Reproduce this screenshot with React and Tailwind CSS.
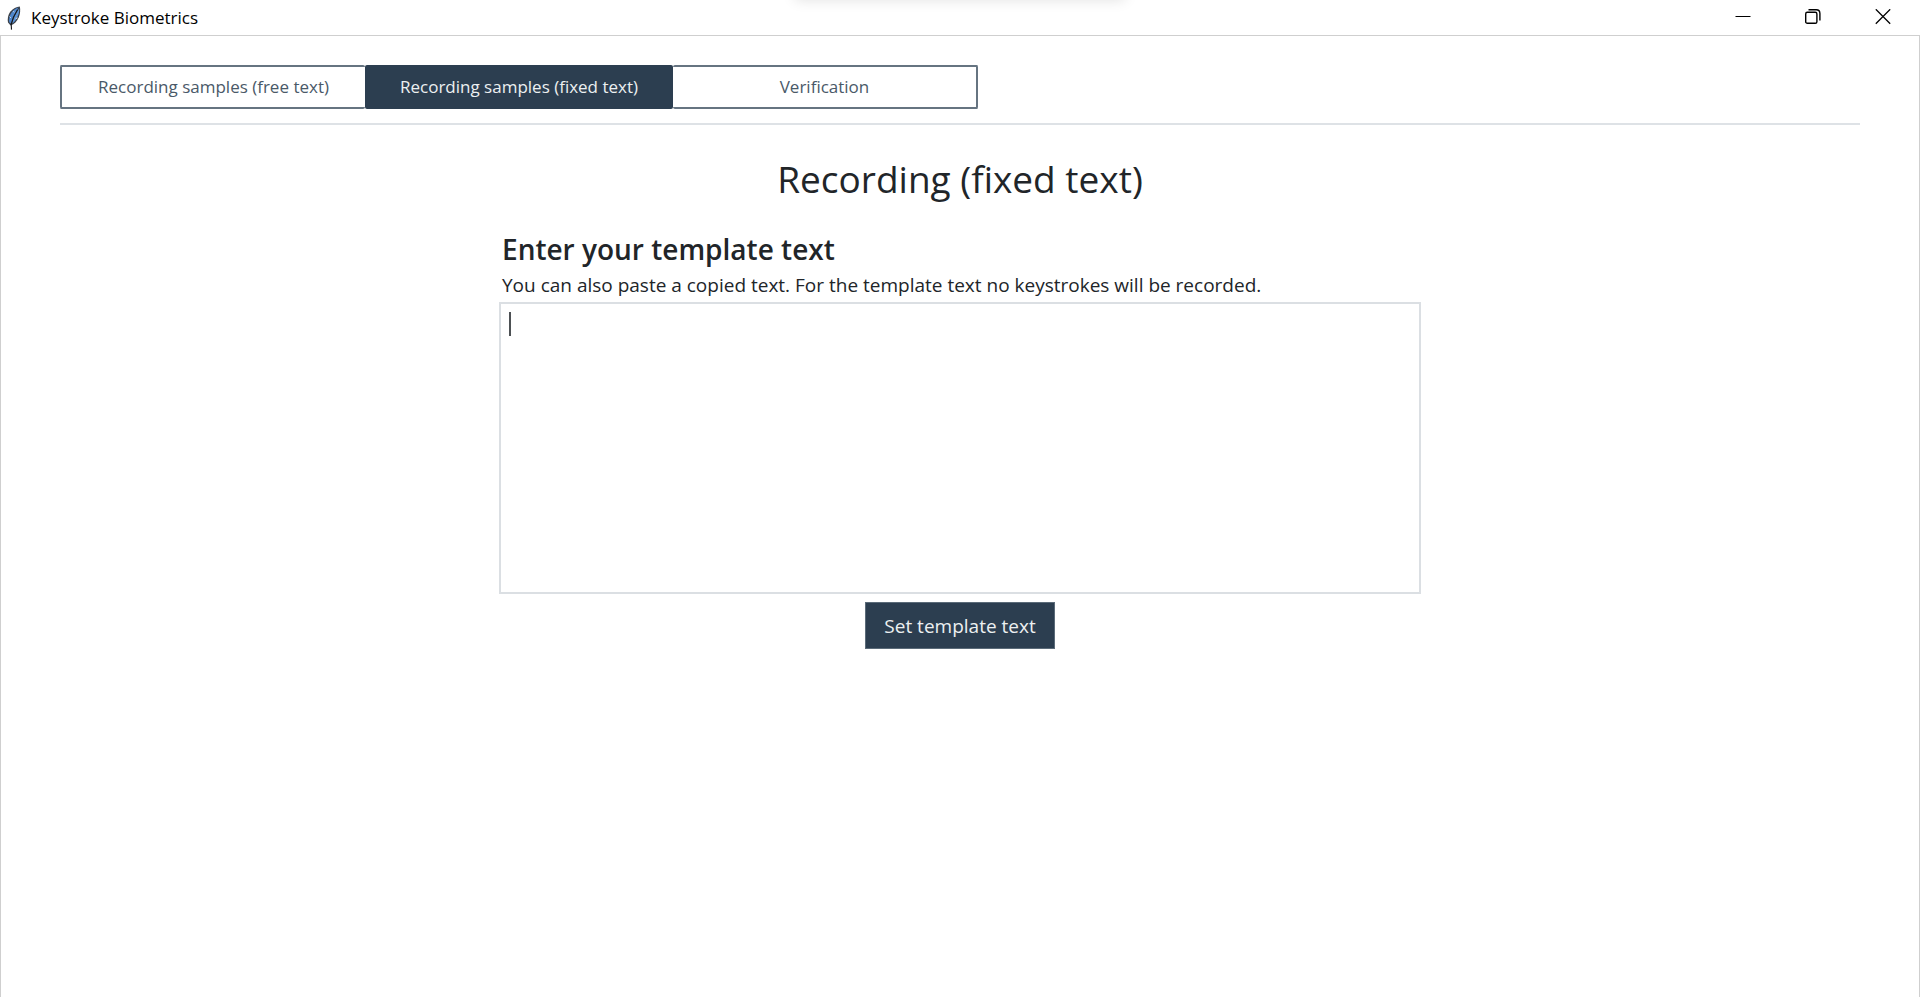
import { useState } from "react";

const TABS = [
  { id: "free", label: "Recording samples (free text)" },
  { id: "fixed", label: "Recording samples (fixed text)" },
  { id: "verify", label: "Verification" },
];

function FeatherIcon() {
  return (
    <svg width="14" height="24" viewBox="0 0 14 24" aria-hidden="true">
      <path d="M12.800.4C9.600.8 5.700 2.400 3.200 5.800 1 9 .2 13.200 1 16.600l2.600 3c3.600-1.400 6.600-4.400 8.200-8.400C13.200 7.600 13.600 3.600 12.800.4Z" fill="#3a4048" />
      <path d="M11.400 1.600C8.800 2.400 6 4.200 4.300 6.900 2.400 9.800 1.700 13 2.200 16.200L4 17.600C6 12 8.300 6.600 11.400 1.600Z" fill="#4f86cc" />
      <path d="M12.200 2.400C12.400 6 11.400 9.400 9.800 12.200 8.600 14.400 6.800 16.600 4.900 17.600 6.500 12.400 8.900 6.800 12.200 2.400Z" fill="#5d93d6" />
      <path d="M10.400 4C7.600 8 5.400 12.800 4.200 18.400L4.500 23.600" fill="none" stroke="#15171b" strokeWidth="1.100" />
      <path d="M8.600 12.800l2-1M2.600 10.600l1.400 1.400M6.400 5.200l.8 1.200" stroke="#dfe4ea" strokeWidth=".9" />
    </svg>
  );
}

function WindowButton({ label, children }) {
  return (
    <button type="button" aria-label={label} className="flex h-[34px] w-[70px] items-center justify-center">
      <svg width="16" height="16" viewBox="0 0 16 16" fill="none" stroke="#000" aria-hidden="true">
        {children}
      </svg>
    </button>
  );
}

function TitleBar() {
  return (
    <header className="relative flex h-9 items-center justify-between overflow-hidden border-b border-[#cfcfcf] pl-[7px]">
      <div className="absolute -top-4 left-1/2 h-4 w-[330px] -translate-x-1/2 shadow-[0_0_14px_rgba(0,0,0,0.12)]" />
      <div className="flex items-center gap-[10px]">
        <FeatherIcon />
        <span className="text-[17px] leading-6 text-black">Keystroke Biometrics</span>
      </div>
      <div className="flex h-full items-start pr-0.5">
        <WindowButton label="Minimize">
          <path d="M.5 7.500h15" />
        </WindowButton>
        <WindowButton label="Restore">
          <rect x=".7" y="3.300" width="11.200" height="11" rx="1.600" strokeWidth="1.400" />
          <path d="M3.500.7h7.700C13.500.7 14.900 2.100 14.900 4.400V11.500" strokeWidth="1.400" />
        </WindowButton>
        <WindowButton label="Close">
          <path d="M.8.3l14.400 14.400M15.200.3L.8 14.700" strokeWidth="1.300" />
        </WindowButton>
      </div>
    </header>
  );
}

export default function App() {
  const [active, setActive] = useState("fixed");
  const [text, setText] = useState("");

  return (
    <div className="flex min-h-screen flex-col bg-white font-['Open_Sans','Noto_Sans',sans-serif] text-[#212529]">
      <TitleBar />
      <main className="flex-1 border-x border-[#cfcfcf] px-[59px] pt-[29px]">
        <nav className="border-b-2 border-[#dee2e6] pb-[14px]">
          <div className="grid w-full max-w-[918px] grid-cols-[305fr_308fr_305fr]">
            {TABS.map((tab) => (
              <button
                key={tab.id}
                type="button"
                onClick={() => setActive(tab.id)}
                className={
                  "h-11 rounded-[2px] text-[17px] leading-6 " +
                  (tab.id === active
                    ? "bg-[#2c3e50] text-[#ecf0f1]"
                    : "border-y-2 border-[#667481] bg-white text-[#4a5968] first:border-l-2 last:border-r-2")
                }
              >
                {tab.label}
              </button>
            ))}
          </div>
        </nav>

        <section className="mx-auto flex w-full max-w-[922px] flex-col pt-[30px]">
          <h1 className="text-center text-[37px] leading-12">Recording (fixed text)</h1>
          <label htmlFor="template" className="mt-[26px] pl-[3px]">
            <span className="block text-[28px] leading-10 font-semibold">Enter your template text</span>
            <span className="block text-[19px] leading-8">
              You can also paste a copied text. For the template text no keystrokes will be recorded.
            </span>
          </label>
          <div className="relative mt-px flex">
            <textarea
              id="template"
              value={text}
              onChange={(event) => setText(event.target.value)}
              className="h-[292px] w-full resize-none border-2 border-[#dbdfe3] bg-white px-2 py-2 text-[19px] leading-7 outline-none"
            />
            {text === "" && <span className="pointer-events-none absolute top-[10px] left-[10px] h-6 w-0.5 bg-[#4d5154]" />}
          </div>
          <button type="button" className="mt-2 h-[47px] self-center border border-[#5b6b79] bg-[#2c3e50] px-[18px] text-[19px] leading-7 text-[#ecf0f1]">
            Set template text
          </button>
        </section>
      </main>
    </div>
  );
}
